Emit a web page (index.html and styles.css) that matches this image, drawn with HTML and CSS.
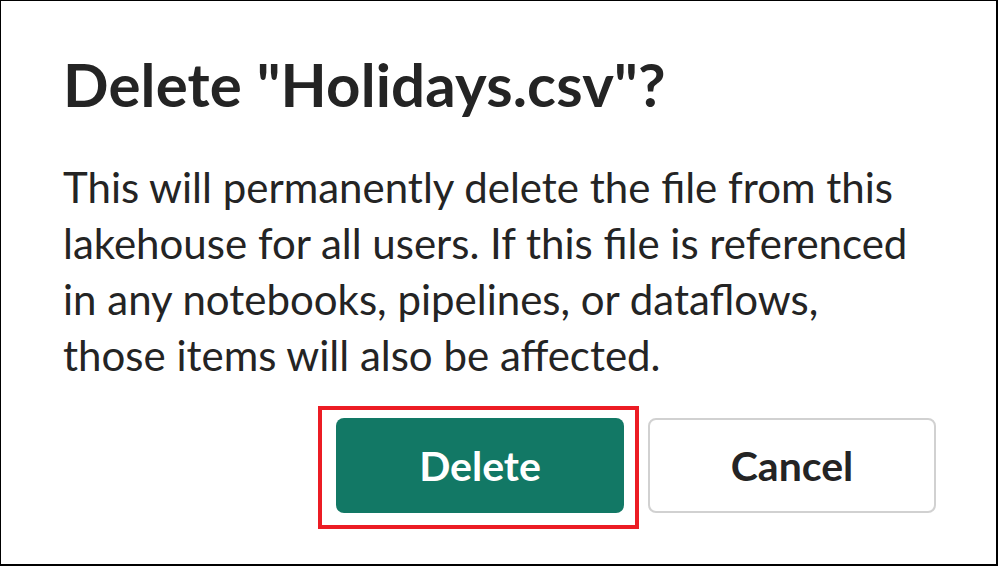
FILE: index.html
```html
<!DOCTYPE html>
<html lang="en">
<head>
<meta charset="utf-8">
<title>Delete file</title>
<link rel="stylesheet" href="styles.css">
</head>
<body>
<div class="frame">
  <h1 class="title">Delete "Holidays.csv"?</h1>
  <p class="message">This will permanently delete the file from this lakehouse for all users. If this file is referenced in any notebooks, pipelines, or dataflows, those items will also be affected.</p>
  <div class="actions">
    <span class="highlight"><button class="btn btn-primary" type="button">Delete</button></span>
    <button class="btn btn-secondary" type="button">Cancel</button>
  </div>
</div>
</body>
</html>
```
FILE: styles.css
```css
html, body {
  margin: 0;
  padding: 0;
  background: #ffffff;
}
.frame {
  box-sizing: border-box;
  width: 998px;
  height: 566px;
  border: 1px solid #000000;
  border-right-width: 2px;
  border-bottom-width: 2px;
  padding: 47px 60px 0 62px;
  font-family: "Lato", "Noto Sans", sans-serif;
  color: #242424;
  display: flex;
  flex-direction: column;
}
.title {
  margin: 0;
  font-size: 60px;
  line-height: 72px;
  font-weight: 700;
  letter-spacing: 0.15px;
}
.message {
  margin: 39px 0 0 0;
  font-size: 42px;
  line-height: 56px;
  font-weight: 400;
  width: 860px;
}
.actions {
  display: flex;
  justify-content: flex-end;
  align-items: flex-start;
  gap: 9px;
  margin-top: 23px;
}
.highlight {
  display: flex;
  border: 4px solid #ec1c24;
  padding: 8px 11px 12px 14px;
}
.btn {
  box-sizing: border-box;
  width: 288px;
  height: 95px;
  border-radius: 8px;
  font-family: inherit;
  font-size: 41px;
  font-weight: 700;
  cursor: pointer;
  padding: 0;
}
.btn-primary {
  background: #127865;
  color: #ffffff;
  border: none;
}
.btn-secondary {
  background: #ffffff;
  color: #242424;
  border: 2px solid #d1d1d1;
  margin-top: 12px;
}
```
